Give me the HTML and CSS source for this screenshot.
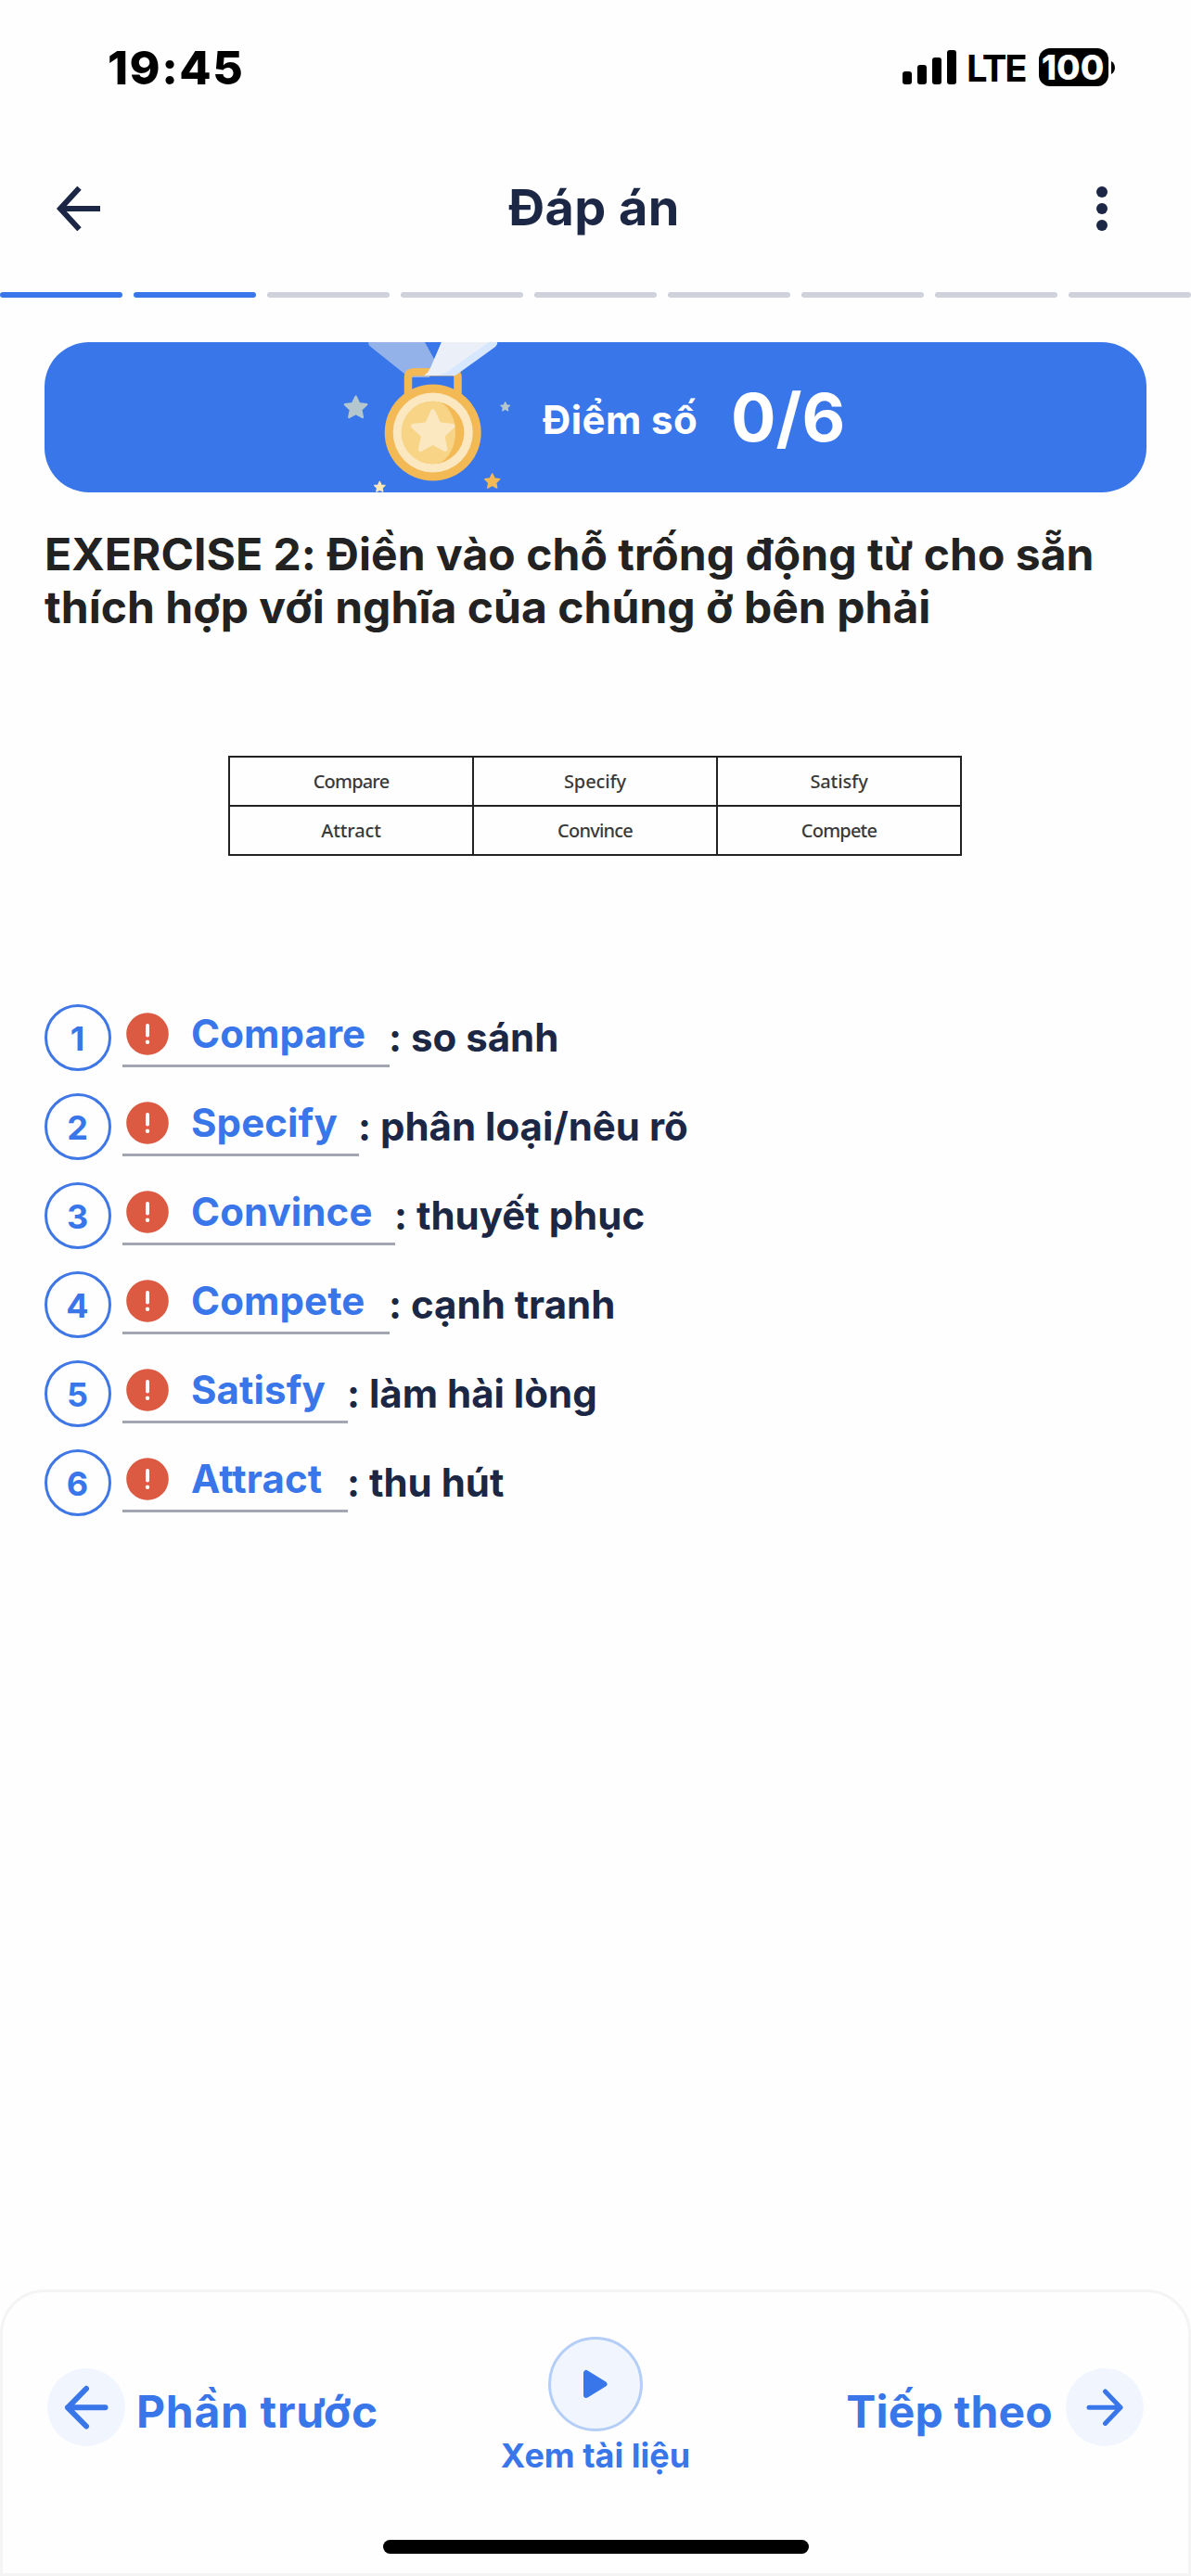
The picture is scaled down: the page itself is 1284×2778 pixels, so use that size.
FILE: index.html
```html
<!DOCTYPE html>
<html lang="vi">
<head>
<meta charset="utf-8">
<title>Đáp án</title>
<link rel="stylesheet" href="styles.css">
</head>
<body>
<div class="screen">
  <div class="status">
    <span class="time">19:45</span>
    <div class="status-right">
      <svg class="signal" width="58" height="37" viewBox="0 0 58 37"><rect y="23" width="10" height="14" rx="3"/><rect x="16" y="16" width="10" height="21" rx="3"/><rect x="32" y="8" width="10" height="29" rx="3"/><rect x="48" width="10" height="37" rx="3"/></svg>
      <span class="lte">LTE</span>
      <span class="battery">100</span>
      <svg class="nub" width="4" height="14" viewBox="0 0 4 14"><path d="M0 0C5.300 3 5.300 11 0 14Z"/></svg>
    </div>
  </div>

  <header class="nav">
    <svg width="48" height="48" viewBox="0 0 48 48"><path d="M25.500 1.700L5 24L25.500 46.300M5 24H48" fill="none" stroke="#1b2744" stroke-width="6"/></svg>
    <h1 class="title">Đáp án</h1>
    <svg width="12" height="48" viewBox="0 0 12 48" fill="#1b2744"><circle cx="6" cy="6" r="6"/><circle cx="6" cy="24" r="6"/><circle cx="6" cy="42" r="6"/></svg>
  </header>

  <div class="progress"><i class="done"></i><i class="done"></i><i></i><i></i><i></i><i></i><i></i><i></i><i></i></div>

  <section class="score">
    <svg width="190" height="162" viewBox="365 369 190 162">
      <defs><path id="star" d="M0-10L2.900-3.800L9.500-3.100L4.600 1.500L5.900 8.100L0 4.900L-5.900 8.100L-4.600 1.500L-9.500-3.100L-2.900-3.800Z" stroke-linejoin="round" stroke-width="2"/></defs>
      <path d="M397 369H458L469 389L463 407H441L399 373.500Q397 372 397 369Z" fill="#93b2ea"/>
      <path d="M440 436V407Q440 401.200 446 401.200H487Q493.500 401.200 493.500 407V436" fill="none" stroke="#f2b955" stroke-width="8.600"/>
      <path d="M476 369H536Q537 371 534 374L491 405H457Q461 403 464 397Z" fill="#d7e7fd"/>
      <path d="M476 369H527L489 396Q479 405 468 405H457Q461 403 464 397Z" fill="#ebeff8"/>
      <circle cx="466.700" cy="466.500" r="52" fill="#f2b955"/>
      <circle cx="466.700" cy="466.500" r="43" fill="#fbe7c0"/>
      <circle cx="466.700" cy="466.500" r="33.700" fill="#f2b955"/>
      <path d="M475 433.900A33.700 33.700 0 1 0 475 499.100C485 493 491 480 491 466C491 452 485 439 475 433.900Z" fill="#f7d486"/>
      <use href="#star" transform="translate(466.700 466.300) scale(2.280)" fill="#fbe7c0" stroke="#fbe7c0"/>
      <use href="#star" transform="translate(383.600 440) scale(1.230)" fill="#b5c7ce" stroke="#b5c7ce"/>
      <use href="#star" transform="translate(544.700 438.800) scale(.52)" fill="#b5c7ce" stroke="#b5c7ce"/>
      <use href="#star" transform="translate(530.700 519.300) scale(.83)" fill="#f2b955" stroke="#f2b955"/>
      <use href="#star" transform="translate(409.300 525.300) scale(.6)" fill="#fbe7c0" stroke="#fbe7c0"/>
    </svg>
    <span class="score-label">Điểm số</span>
    <span class="score-value">0/6</span>
  </section>

  <h2 class="exercise">EXERCISE 2: Điền vào chỗ trống động từ cho sẵn<br>thích hợp với nghĩa của chúng ở bên phải</h2>

  <div class="words">
    <span class="tight">Compare</span><span>Specify</span><span>Satisfy</span>
    <span>Attract</span><span class="tight">Convince</span><span class="tight">Compete</span>
  </div>

  <svg width="0" height="0" class="defs"><symbol id="err" viewBox="0 0 46 46"><circle cx="23" cy="23" r="22.800" fill="#dc5a42"/><path d="M23 14V24.500" stroke="#fff" stroke-width="4" stroke-linecap="round"/><circle cx="23" cy="31.700" r="2.200" fill="#fff"/></symbol></svg>
  <ol class="answers">
    <li><span class="num">1</span><span class="blank w288"><svg><use href="#err"/></svg>Compare</span><span class="meaning">: so sánh</span></li>
    <li><span class="num">2</span><span class="blank w255"><svg><use href="#err"/></svg>Specify</span><span class="meaning">: phân loại/nêu rõ</span></li>
    <li><span class="num">3</span><span class="blank w294"><svg><use href="#err"/></svg>Convince</span><span class="meaning">: thuyết phục</span></li>
    <li><span class="num">4</span><span class="blank w288"><svg><use href="#err"/></svg>Compete</span><span class="meaning">: cạnh tranh</span></li>
    <li><span class="num">5</span><span class="blank w243"><svg><use href="#err"/></svg>Satisfy</span><span class="meaning">: làm hài lòng</span></li>
    <li><span class="num">6</span><span class="blank w243"><svg><use href="#err"/></svg>Attract</span><span class="meaning">: thu hút</span></li>
  </ol>

  <footer class="footer">
    <div class="actions">
      <div class="prev">
        <span class="round"><svg width="48" height="48" viewBox="0 0 48 48"><path d="M24 4L4 24.300L24 44.500M4 24.300H44.500" fill="none" stroke="#3976ea" stroke-width="6" stroke-linecap="round" stroke-linejoin="round"/></svg></span>
        <span class="label wide">Phần trước</span>
      </div>
      <div class="doc">
        <span class="play"><svg width="28" height="32" viewBox="0 0 28 32"><path d="M4 4V28L23.500 16Z" fill="#3976ea" stroke="#3976ea" stroke-width="6" stroke-linejoin="round"/></svg></span>
        <span>Xem tài liệu</span>
      </div>
      <div class="next">
        <span class="label">Tiếp theo</span>
        <span class="round"><svg width="40" height="40" viewBox="0 0 40 40"><path d="M20.500 3L37 20.300L20.500 37.500M37 20.300H3" fill="none" stroke="#3976ea" stroke-width="5" stroke-linecap="round" stroke-linejoin="round"/></svg></span>
      </div>
    </div>
    <div class="home"></div>
  </footer>
</div>
</body>
</html>
```
FILE: styles.css
```css
* { box-sizing: border-box; margin: 0; padding: 0; }
body { background: #fff; font-family: Inter, "Noto Sans", sans-serif; font-variant-ligatures: none; }
svg { display: block; flex: none; }
.screen { width: 1284px; height: 2778px; display: flex; flex-direction: column; background: #fefefe; overflow: hidden; }

.status { height: 141px; padding: 43px 82px 0 116px; display: flex; justify-content: space-between; }
.time { font-size: 50px; line-height: 60px; font-weight: 800; letter-spacing: 1.5px; color: #000; }
.status-right { display: flex; align-items: flex-start; }
.signal { margin-top: 11px; }
.lte { margin: 7px 0 0 11px; width: 66px; font-size: 40px; line-height: 48px; font-weight: 650; letter-spacing: -2.2px; }
.battery { margin: 9px 3px 0 12px; width: 75px; height: 41px; padding-right: 2px; border-radius: 12px; background: #000; color: #fff; font-size: 37px; line-height: 41px; font-weight: 800; display: flex; justify-content: center; }
.nub { margin-top: 23px; }

.nav { height: 168px; padding: 0 90px 0 60px; display: flex; align-items: center; justify-content: space-between; }
.title { font-size: 54px; line-height: 64px; font-weight: 700; letter-spacing: .4px; color: #1b2744; padding-bottom: 3px; margin-right: 9px; }

.progress { margin-top: 6px; display: flex; gap: 12px; }
.progress i { flex: 1; height: 6px; border-radius: 3px; background: #cfd2da; }
.progress .done { background: #3976ea; }

.score { margin: 48px 48px 0; height: 162px; border-radius: 48px; background: #3976ea; color: #fff; display: flex; align-items: center; padding-left: 317px; overflow: hidden; flex: none; }
.score-label { margin-left: 30px; font-size: 42px; line-height: 50px; font-weight: 700; letter-spacing: .4px; width: 203px; padding-top: 5px; white-space: nowrap; }
.score-value { font-size: 72px; line-height: 86px; font-weight: 700; }

.exercise { margin: 38px 48px 0; font-size: 48px; line-height: 57px; font-weight: 700; letter-spacing: .04px; color: #222; white-space: nowrap; }

.words { margin: 132px 0 0 246px; width: 791px; height: 108px; display: grid; grid-template: 1fr 1fr / 1fr 1fr 1fr; border: 2px solid #222; gap: 2px; background: #222; flex: none; }
.words span { background: #fefefe; display: flex; align-items: center; justify-content: center; font: 500 20px/24px "Noto Sans", sans-serif; color: #3a3a3a; letter-spacing: -.1px; }
.words .tight { letter-spacing: -.8px; }

.defs { position: absolute; }
.answers { list-style: none; margin: 160px 48px 0; display: flex; flex-direction: column; gap: 24px; }
.answers li { height: 72px; display: flex; }
.num { width: 72px; height: 72px; border: 3px solid #3f77e6; border-radius: 50%; margin-right: 12px; padding-right: 1px; color: #3976ea; font-size: 36px; line-height: 68px; font-weight: 700; text-align: center; flex: none; }
.blank { height: 68px; border-bottom: 3px solid #a2a6b1; display: flex; align-items: center; padding: 0 0 1px 4px; gap: 24px; color: #3976ea; font-size: 42px; line-height: 50px; font-weight: 700; letter-spacing: .1px; flex: none; }
.blank svg { width: 46px; height: 46px; }
.w288 { width: 288px; }
.w255 { width: 255px; }
.w294 { width: 294px; }
.w243 { width: 243px; }
.meaning { color: #1b2744; font-size: 42px; line-height: 50px; font-weight: 700; padding-top: 11px; margin-left: -1px; white-space: nowrap; }

.footer { margin-top: auto; height: 309px; border: 3px solid #f4f4f4; border-radius: 48px 48px 0 0; flex: none; display: flex; flex-direction: column; }
.actions { display: grid; grid-template-columns: 1fr auto 1fr; color: #3976ea; font-weight: 700; font-size: 48px; line-height: 58px; padding: 48px 48px 0; height: 267px; }
.prev, .next { display: flex; align-items: center; height: 84px; margin-top: 34px; gap: 12px; }
.next { justify-content: flex-end; gap: 14px; }
.label { padding-top: 9px; letter-spacing: .2px; white-space: nowrap; }
.wide { letter-spacing: .7px; }
.round { width: 84px; height: 84px; border-radius: 50%; background: #f0f5fe; display: flex; align-items: center; justify-content: center; flex: none; }
.doc { display: flex; flex-direction: column; align-items: center; font-size: 36px; line-height: 44px; gap: 4px; }
.play { width: 102px; height: 102px; border: 3px solid #b4cef7; border-radius: 50%; background: #f0f5fe; display: flex; align-items: center; justify-content: center; }
.home { width: 459px; height: 15px; border-radius: 8px; background: #000; margin: 0 auto; }
```
